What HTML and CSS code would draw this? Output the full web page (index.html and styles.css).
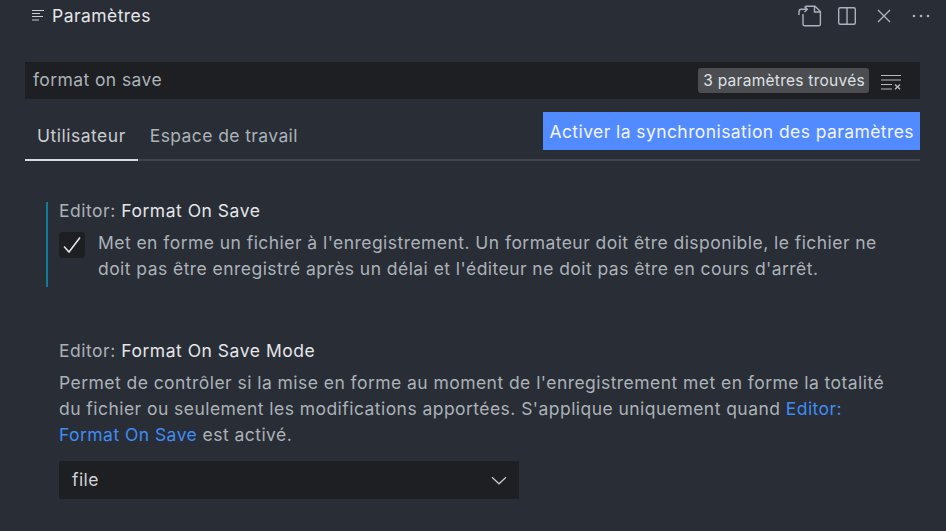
FILE: index.html
```html
<!DOCTYPE html>
<html lang="fr">
<head>
<meta charset="utf-8">
<title>Paramètres</title>
<link rel="stylesheet" href="styles.css">
</head>
<body>
<header class="titlebar">
  <div class="title">
    <svg class="title-icon" width="14" height="14" viewBox="0 0 14 14" fill="none" stroke="#c8cbd0" stroke-width="1.200"><path d="M1 2.500h12M1 5.500h8M1 8.500h11M1 12h7"/></svg>
    <span>Paramètres</span>
  </div>
  <div class="actions">
    <svg class="act-doc" width="24" height="22" viewBox="0 0 24 22" fill="none" stroke="#abb2bf" stroke-width="1.400"><path d="M5 9v10.300c0 .8.600 1.400 1.400 1.400H21c.8 0 1.400-.6 1.400-1.400V6.500L17 1.300H7.500"/><path d="M16.500 1.300v5.700H22"/><path d="M1 10V6.500c0-1.300 1-2.300 2.300-2.300H9M6.500 1.500 9.300 4.200 6.500 7"/></svg>
    <svg class="act-split" width="20" height="20" viewBox="0 0 20 20" fill="none" stroke="#abb2bf" stroke-width="1.400"><rect x="1.700" y="1.700" width="16.600" height="16.600" rx="1.500"/><path d="M10 1.700v16.600"/></svg>
    <svg class="act-close" width="14" height="14" viewBox="0 0 14 14" fill="none" stroke="#abb2bf" stroke-width="1.400"><path d="M1 1l12 12M13 1 1 13"/></svg>
    <svg class="act-more" width="18" height="4" viewBox="0 0 18 4" fill="#abb2bf"><circle cx="2" cy="2" r="1.300"/><circle cx="9" cy="2" r="1.300"/><circle cx="16" cy="2" r="1.300"/></svg>
  </div>
</header>

<div class="search">
  <span class="query">format on save</span>
  <span class="badge">3 paramètres trouvés</span>
  <svg class="clear" width="22" height="16" viewBox="0 0 22 16" fill="none" stroke="#b4b7bc" stroke-width="1.200"><path d="M1 1.500h20M1 6h20M1 10.500h11M1 15h11"/><path d="M15 10.500l5 4.800M20 10.500l-5 4.800" stroke-width="1.500"/></svg>
</div>

<nav class="tabs">
  <a class="tab tab-active">Utilisateur</a>
  <a class="tab">Espace de travail</a>
  <button class="sync">Activer la synchronisation des paramètres</button>
</nav>

<main class="settings">
  <section class="setting setting-modified">
    <h2 class="setting-title"><span class="category">Editor: </span>Format On Save</h2>
    <div class="check-row">
      <span class="checkbox">
        <svg width="20" height="18" viewBox="0 0 20 18" fill="none" stroke="#e6e8ea" stroke-width="1.500"><path d="M2 10.500 7 16 18 1.500"/></svg>
      </span>
      <p class="desc">Met en forme un fichier à l'enregistrement. Un formateur doit être disponible, le fichier ne doit pas être enregistré après un délai et l'éditeur ne doit pas être en cours d'arrêt.</p>
    </div>
  </section>

  <section class="setting setting-mode">
    <h2 class="setting-title"><span class="category">Editor: </span>Format On Save Mode</h2>
    <p class="desc">Permet de contrôler si la mise en forme au moment de l'enregistrement met en forme la totalité du fichier ou seulement les modifications apportées. S'applique uniquement quand <a class="link">Editor: Format On Save</a> est activé.</p>
    <div class="select">
      <span>file</span>
      <svg width="16" height="9" viewBox="0 0 16 9" fill="none" stroke="#c5c7cb" stroke-width="1.300"><path d="M1 1.200 8 7.800 15 1.200"/></svg>
    </div>
  </section>
</main>
</body>
</html>
```

FILE: styles.css
```css
* { box-sizing: border-box; }
html, body { height: 100%; }
body {
  margin: 0;
  height: 531px;
  overflow: hidden;
  background: #292d35;
  color: #abb2bf;
  font-family: Inter, "Noto Sans", sans-serif;
  font-size: 17.5px;
  letter-spacing: 0.4px;
  padding: 0 26px 0 25px;
}
.titlebar {
  display: flex;
  justify-content: space-between;
  align-items: center;
  height: 32px;
}
.title {
  display: flex;
  align-items: center;
  gap: 7px;
  padding-left: 6px;
  margin-top: -2px;
  color: #e4e6e9;
  letter-spacing: 0.45px;
}
.actions {
  display: flex;
  align-items: center;
  margin-right: -10px;
}
.act-split { margin-left: 15px; }
.act-close { margin-left: 20px; }
.act-more { margin-left: 21px; }
.search {
  display: flex;
  align-items: center;
  height: 37px;
  margin-top: 30px;
  padding: 0 0 0 8px;
  background: #1e1f22;
}
.query { flex: 1; color: #abb2b8; position: relative; top: -1px; }
.badge {
  height: 25px;
  line-height: 25px;
  padding: 0 4px 0 5px;
  border-radius: 3px;
  background: #4b4d50;
  color: #dfe1e4;
  font-size: 15.5px;
  letter-spacing: 0.27px;
}
.clear { margin-left: 11px; margin-right: 18px; margin-top: 2px; }
.tabs {
  display: flex;
  align-items: flex-end;
  height: 62px;
  border-bottom: 2px solid #41444a;
}
.tab {
  height: 50px;
  line-height: 49px;
  padding: 0 12px;
  margin-bottom: -2px;
  color: #abb2b8;
}
.tab-active {
  color: #c9ccd1;
  border-bottom: 2px solid #d9dbde;
  letter-spacing: 0.5px;
}
.sync {
  margin-left: auto;
  margin-bottom: 9px;
  height: 38px;
  padding: 0 6px;
  border: 0;
  background: #528bff;
  color: #f2f5fb;
  font: inherit;
  letter-spacing: 0.42px;
}
.settings { display: flex; flex-direction: column; }
.setting {
  padding-left: 12px;
  padding-right: 26px;
  border-left: 2px solid transparent;
  margin-left: 20px;
}
.setting-modified {
  margin-top: 41px;
  height: 85px;
  border-left-color: #0f7d99;
  margin-left: 21px;
  padding-left: 11px;
}
.setting-mode { margin-top: 52px; }
.setting-title {
  margin: 0;
  font-size: inherit;
  font-weight: 400;
  line-height: 24px;
  letter-spacing: 0.52px;
  color: #e4e6e9;
}
.setting-modified .setting-title { position: relative; top: -3px; }
.category { color: #abb2b8; }
.check-row { display: flex; gap: 13px; margin-top: 4px; }
.checkbox {
  flex: none;
  display: flex;
  align-items: center;
  justify-content: center;
  width: 26px;
  height: 26px;
  margin-top: 2px;
  border-radius: 4px;
  background: #1e1f22;
}
.desc {
  margin: 0;
  line-height: 26px;
  letter-spacing: 0.45px;
  color: #abb2b8;
}
.setting-mode .desc { margin-top: 7px; }
.link { color: #3f8cf5; }
.select {
  display: flex;
  align-items: center;
  justify-content: space-between;
  width: 460px;
  height: 38px;
  margin-top: 13px;
  padding: 0 12px 2px 13px;
  background: #1e1f22;
  color: #d2d4d7;
}
.select svg { margin-top: 2px; }
```
